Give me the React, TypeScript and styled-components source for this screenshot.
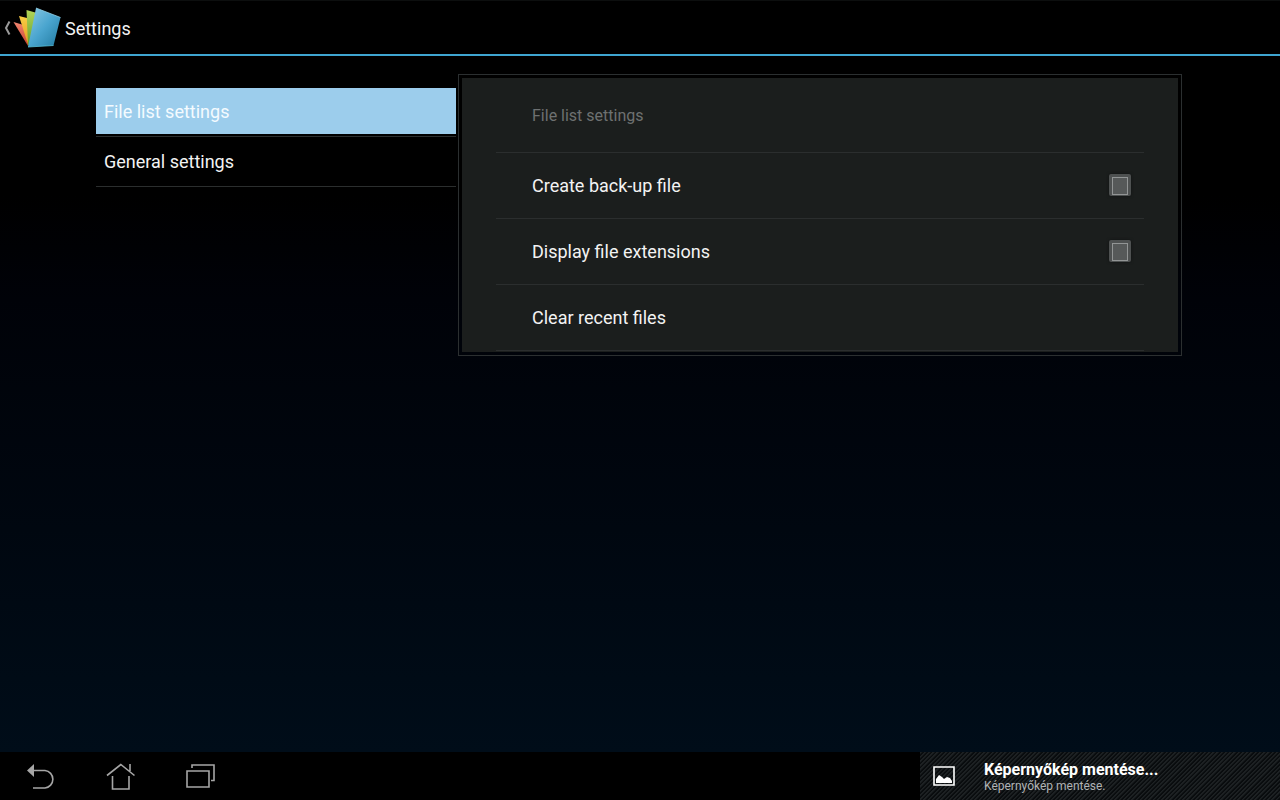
import React from "react";
import styled, { createGlobalStyle } from "styled-components";

const GlobalStyle = createGlobalStyle`
  * { box-sizing: border-box; }
  body {
    margin: 0;
    background: #000;
    color: #f3f3f3;
    font-family: Roboto, "Noto Sans", sans-serif;
    font-size: 18px;
    line-height: 24px;
  }
  button {
    border: 0;
    background: none;
    color: inherit;
    font: inherit;
    padding: 0;
    cursor: pointer;
  }
`;

const Screen = styled.div`
  display: flex;
  flex-direction: column;
  min-height: 100vh;
`;

const ActionBar = styled.header`
  display: flex;
  align-items: center;
  gap: 4px;
  height: 56px;
  padding-left: 4px;
  background: #000;
  border-top: 1px solid #0c0e0e;
  border-bottom: 2px solid #3fa5d0;
`;

const UpButton = styled.button`
  display: flex;
  align-items: center;
`;

const Title = styled.h1`
  margin: 0;
  font-size: 18px;
  font-weight: 400;
  padding-top: 2px;
`;

const Content = styled.main`
  flex: 1;
  display: grid;
  grid-template-columns: 360px minmax(0, 1fr);
  align-items: start;
  gap: 2px;
  padding: 18px 98px 24px 96px;
  background: linear-gradient(#000 0%, #000 20%, #000208 35%, #000710 68%, #000d19 100%);
`;

const Categories = styled.nav`
  padding-top: 13px;
`;

const CategoryItem = styled.div`
  padding: 1px 0 2px;
  border-bottom: 1px solid #2b2e2e;
`;

const CategoryButton = styled.button<{ $active?: boolean }>`
  display: block;
  width: 100%;
  height: 46px;
  padding: 2px 8px 0;
  text-align: left;
  color: ${(p) => (p.$active ? "#f4fbff" : "#f3f3f3")};
  background: ${(p) => (p.$active ? "#9ccdec" : "transparent")};
`;

const Frame = styled.section`
  padding: 3px;
  border: 1px solid #2b2f30;
`;

const Panel = styled.div`
  padding: 0 34px 1px;
  background: #1b1e1d;
`;

const PanelHeading = styled.h2`
  display: flex;
  align-items: center;
  height: 75px;
  margin: 0;
  padding: 2px 36px 0;
  border-bottom: 1px solid #2b2e2e;
  color: #6e7171;
  font-size: 16px;
  font-weight: 400;
`;

const Row = styled.div`
  display: flex;
  align-items: center;
  justify-content: space-between;
  height: 66px;
  padding: 0 13px 1px 36px;
  border-bottom: 1px solid #2b2e2e;
`;

const RowLabel = styled.label`
  flex: 1;
  padding-top: 1px;
`;

const RowButton = styled.button`
  flex: 1;
  padding-top: 1px;
  text-align: left;
`;

const Checkbox = styled.input`
  appearance: none;
  width: 22px;
  height: 22px;
  margin: 0;
  padding: 3px;
  border-radius: 2px;
  background: #4e5151;
  box-shadow: 0 0 3px #101212;

  &::before {
    content: "";
    display: block;
    height: 16px;
    border: 1px solid #929595;
    background: #565959;
  }
  &:checked::before {
    background: #3fa5d0;
  }
`;

const SystemBar = styled.footer`
  display: flex;
  justify-content: space-between;
  height: 48px;
  background: #000;
`;

const NavKeys = styled.div`
  display: flex;
`;

const NavKey = styled.button`
  display: flex;
  align-items: center;
  justify-content: center;
  width: 80px;
  height: 48px;
`;

const Notification = styled.div`
  display: flex;
  align-items: center;
  gap: 28px;
  width: 360px;
  padding-left: 12px;
  background: repeating-linear-gradient(135deg, #1d2123 0, #1d2123 1px, #090c0e 2px, #090c0e 3px);
`;

const NoticeTitle = styled.div`
  padding-top: 2px;
  font-size: 16px;
  line-height: 18px;
  font-weight: 700;
  color: #fff;
`;

const NoticeText = styled.div`
  font-size: 12px;
  line-height: 14px;
  color: #b0b3b5;
`;

const Logo = () => (
  <svg width="57" height="48" viewBox="4 4 57 48" aria-hidden="true">
    <defs>
      <linearGradient id="blue" x1="0" y1="0" x2="1" y2="1">
        <stop offset="0" stopColor="#8cc9e4" />
        <stop offset="0.5" stopColor="#4aa5cf" />
        <stop offset="1" stopColor="#20799f" />
      </linearGradient>
      <linearGradient id="green" x1="0" y1="0" x2="0" y2="1">
        <stop offset="0" stopColor="#b4d455" />
        <stop offset="1" stopColor="#5da02e" />
      </linearGradient>
      <linearGradient id="yellow" x1="0" y1="0" x2="0" y2="1">
        <stop offset="0" stopColor="#f8ce45" />
        <stop offset="1" stopColor="#e39a20" />
      </linearGradient>
      <linearGradient id="red" x1="0" y1="0" x2="0" y2="1">
        <stop offset="0" stopColor="#f08570" />
        <stop offset="1" stopColor="#c8402a" />
      </linearGradient>
    </defs>
    <path d="M9.5 21.5L6 28L9.5 34.5" fill="none" stroke="#9a9a9a" strokeWidth="2" />
    <path d="M13.5 22L27 26L28 46Z" fill="url(#red)" />
    <path d="M19 16L31 19L28.5 46Z" fill="url(#yellow)" />
    <path d="M26.5 10L37 13L30 46L28 45Z" fill="url(#green)" />
    <path d="M36 8L60.5 17.5L53.5 45.5L28 47Z" fill="url(#blue)" />
    <path d="M36 8L60.5 17.5" fill="none" stroke="#8fd0e8" strokeWidth="0.8" />
    <path d="M28 47L53.5 45.5" fill="none" stroke="#58c0d8" strokeWidth="0.8" />
  </svg>
);

const BackIcon = () => (
  <svg width="30" height="28" viewBox="25 762 30 28" aria-hidden="true">
    <path d="M33 770.5H45A8.8 8.8 0 0 1 45 788H33" fill="none" stroke="#a6a6a6" strokeWidth="1.6" />
    <path d="M27 770.5L34 764V777Z" fill="#a6a6a6" />
  </svg>
);

const HomeIcon = () => (
  <svg width="30" height="28" viewBox="105 762 30 28" aria-hidden="true">
    <path d="M107 775.5L120.8 764.5L134.5 775.5M130 771V764M112.5 776V789H129V776" fill="none" stroke="#a6a6a6" strokeWidth="1.6" />
  </svg>
);

const RecentIcon = () => (
  <svg width="30" height="28" viewBox="185 762 30 28" aria-hidden="true">
    <path d="M187 771H209V787H187ZM192 768V765H214V780.5H211" fill="none" stroke="#a6a6a6" strokeWidth="1.6" />
  </svg>
);

const PictureIcon = () => (
  <svg width="24" height="22" viewBox="932 765 24 22" aria-hidden="true">
    <path d="M934 767H954V785H934Z" fill="none" stroke="#fff" strokeWidth="1.6" />
    <path d="M936 783V779L939 775L942 777L944 779L947 777L950 778L952 781V783Z" fill="#fff" />
  </svg>
);

export default function App() {
  return (
    <Screen>
      <GlobalStyle />
      <ActionBar>
        <UpButton aria-label="Navigate up">
          <Logo />
        </UpButton>
        <Title>Settings</Title>
      </ActionBar>
      <Content>
        <Categories>
          <CategoryItem>
            <CategoryButton $active>File list settings</CategoryButton>
          </CategoryItem>
          <CategoryItem>
            <CategoryButton>General settings</CategoryButton>
          </CategoryItem>
        </Categories>
        <Frame>
          <Panel>
            <PanelHeading>File list settings</PanelHeading>
            <Row>
              <RowLabel htmlFor="backup">Create back-up file</RowLabel>
              <Checkbox type="checkbox" id="backup" />
            </Row>
            <Row>
              <RowLabel htmlFor="extensions">Display file extensions</RowLabel>
              <Checkbox type="checkbox" id="extensions" />
            </Row>
            <Row>
              <RowButton>Clear recent files</RowButton>
            </Row>
          </Panel>
        </Frame>
      </Content>
      <SystemBar>
        <NavKeys>
          <NavKey aria-label="Back"><BackIcon /></NavKey>
          <NavKey aria-label="Home"><HomeIcon /></NavKey>
          <NavKey aria-label="Recent apps"><RecentIcon /></NavKey>
        </NavKeys>
        <Notification role="status">
          <PictureIcon />
          <div>
            <NoticeTitle>Képernyőkép mentése...</NoticeTitle>
            <NoticeText>Képernyőkép mentése.</NoticeText>
          </div>
        </Notification>
      </SystemBar>
    </Screen>
  );
}
